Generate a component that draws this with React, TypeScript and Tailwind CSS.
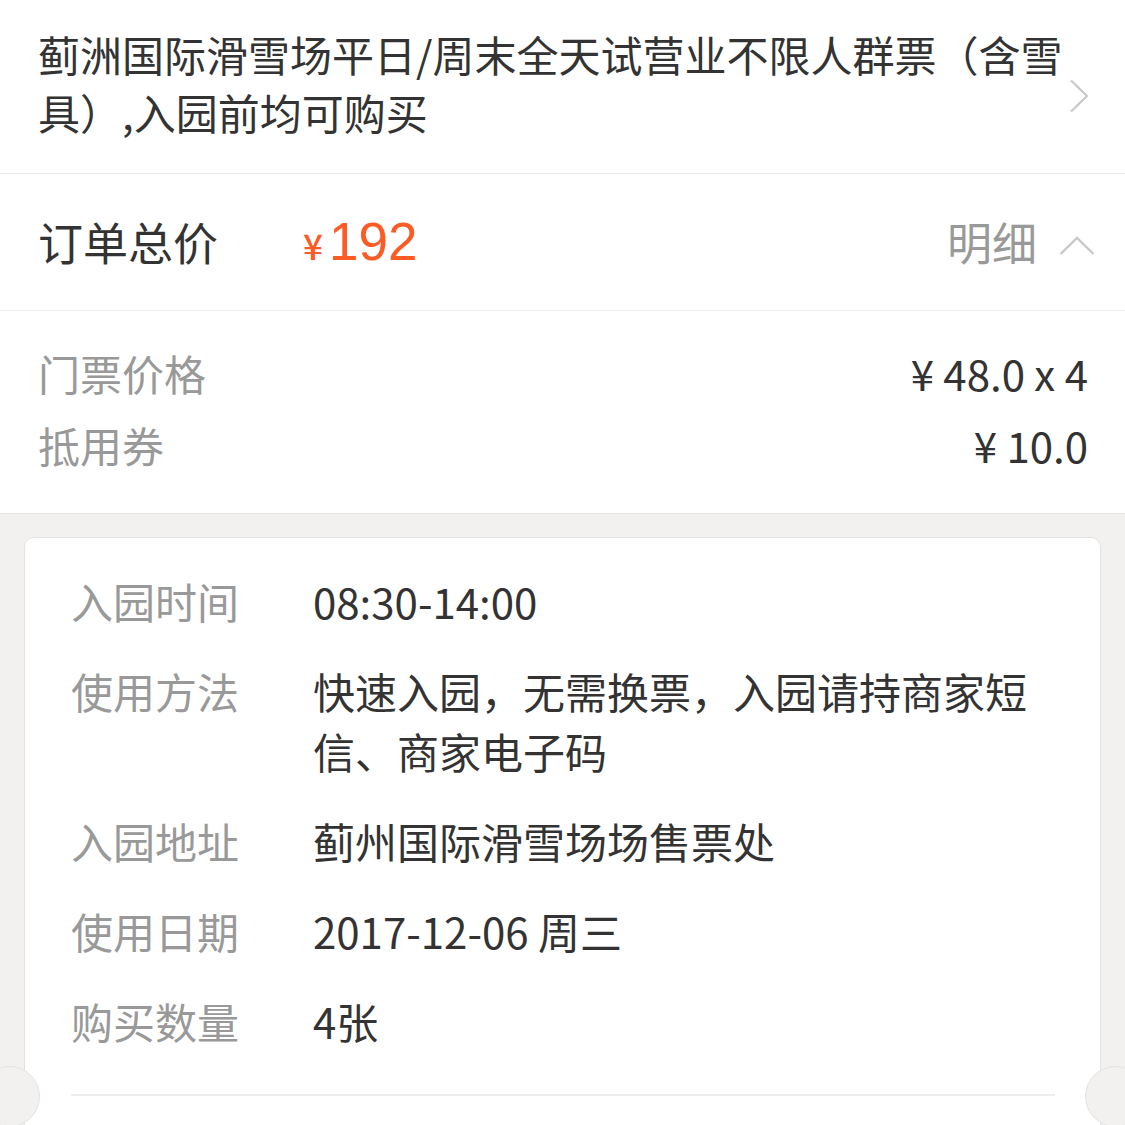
const CJK = "font-['Noto_Sans_CJK_SC','Noto_Sans',sans-serif]";

const DETAILS: { label: string; value: string }[] = [
  { label: "入园时间", value: "08:30-14:00" },
  { label: "使用方法", value: "快速入园，无需换票，入园请持商家短信、商家电子码" },
  { label: "入园地址", value: "蓟州国际滑雪场场售票处" },
  { label: "使用日期", value: "2017-12-06 周三" },
  { label: "购买数量", value: "4张" },
];

function ChevronRight() {
  return (
    <svg width="20" height="34" viewBox="0 0 20 34" fill="none">
      <path d="M2 1.5 L18 17 L2 32.5" stroke="#c8c8c8" strokeWidth="2.2" />
    </svg>
  );
}

function ChevronUp() {
  return (
    <svg width="36" height="20" viewBox="0 0 36 20" fill="none">
      <path d="M1.5 18 L18 2 L34.5 18" stroke="#c8c8c8" strokeWidth="2.4" />
    </svg>
  );
}

export default function App() {
  return (
    <main className={`h-[1125px] overflow-hidden bg-[#f2f1ef] ${CJK}`}>
      <section className="bg-white flex items-center pl-[38px] pr-[36px] h-[174px] border-b border-[#e6e6e6]">
        <p className="w-[1036px] text-[42px] leading-[58px] text-[#333] -mt-[8px]">
          蓟洲国际滑雪场平日/周末全天试营业不限人群票（含雪具）,入园前均可购买
        </p>
        <div className="ml-auto mt-[18px]">
          <ChevronRight />
        </div>
      </section>

      <section className="bg-white flex items-center h-[137px] pl-[38px] pr-[30px] border-b border-[#eeeeee]">
        <span className="text-[45px] text-[#333] w-[265px]">订单总价</span>
        <span className="text-[#fd5b26] flex items-baseline">
          <span className="text-[35px] font-medium mr-[6px]">¥</span>
          <span className="text-[53px] font-['Liberation_Sans',sans-serif]">192</span>
        </span>
        <span className="ml-auto text-[45px] text-[#999]">明细</span>
        <span className="ml-[22px] mt-[8px]">
          <ChevronUp />
        </span>
      </section>

      <section className="bg-white pl-[38px] pr-[37px] pt-[25px] pb-[33px] border-b border-[#e4e4e4] flex flex-col">
        <div className="flex justify-between h-[72px] items-center">
          <span className="text-[42px] text-[#999]">门票价格</span>
          <span className="text-[42px] text-[#333]">¥ 48.0 x 4</span>
        </div>
        <div className="flex justify-between h-[72px] items-center">
          <span className="text-[42px] text-[#999]">抵用券</span>
          <span className="text-[42px] text-[#333]">¥ 10.0</span>
        </div>
      </section>

      <div className="relative pt-[23px] px-[24px]">
        <div className="bg-white rounded-[10px] border border-[#e3e3e3] pt-[33px] pl-[46px] pr-[45px] pb-[120px]">
          <div className="flex flex-col gap-[30px]">
            {DETAILS.map((d) => (
              <div key={d.label} className="flex text-[42px] leading-[60px]">
                <span className="w-[242px] shrink-0 text-[#999]">{d.label}</span>
                <span className="text-[#333]">{d.value}</span>
              </div>
            ))}
          </div>
          <div className="mt-[43px] h-[2px] bg-[#eeeeee]" />
        </div>
        <div className="absolute left-[-21px] top-[552px] w-[61px] h-[61px] rounded-full bg-[#f2f1ef] border border-[#e3e3e3]" />
        <div className="absolute right-[-21px] top-[552px] w-[61px] h-[61px] rounded-full bg-[#f2f1ef] border border-[#e3e3e3]" />
      </div>
    </main>
  );
}
